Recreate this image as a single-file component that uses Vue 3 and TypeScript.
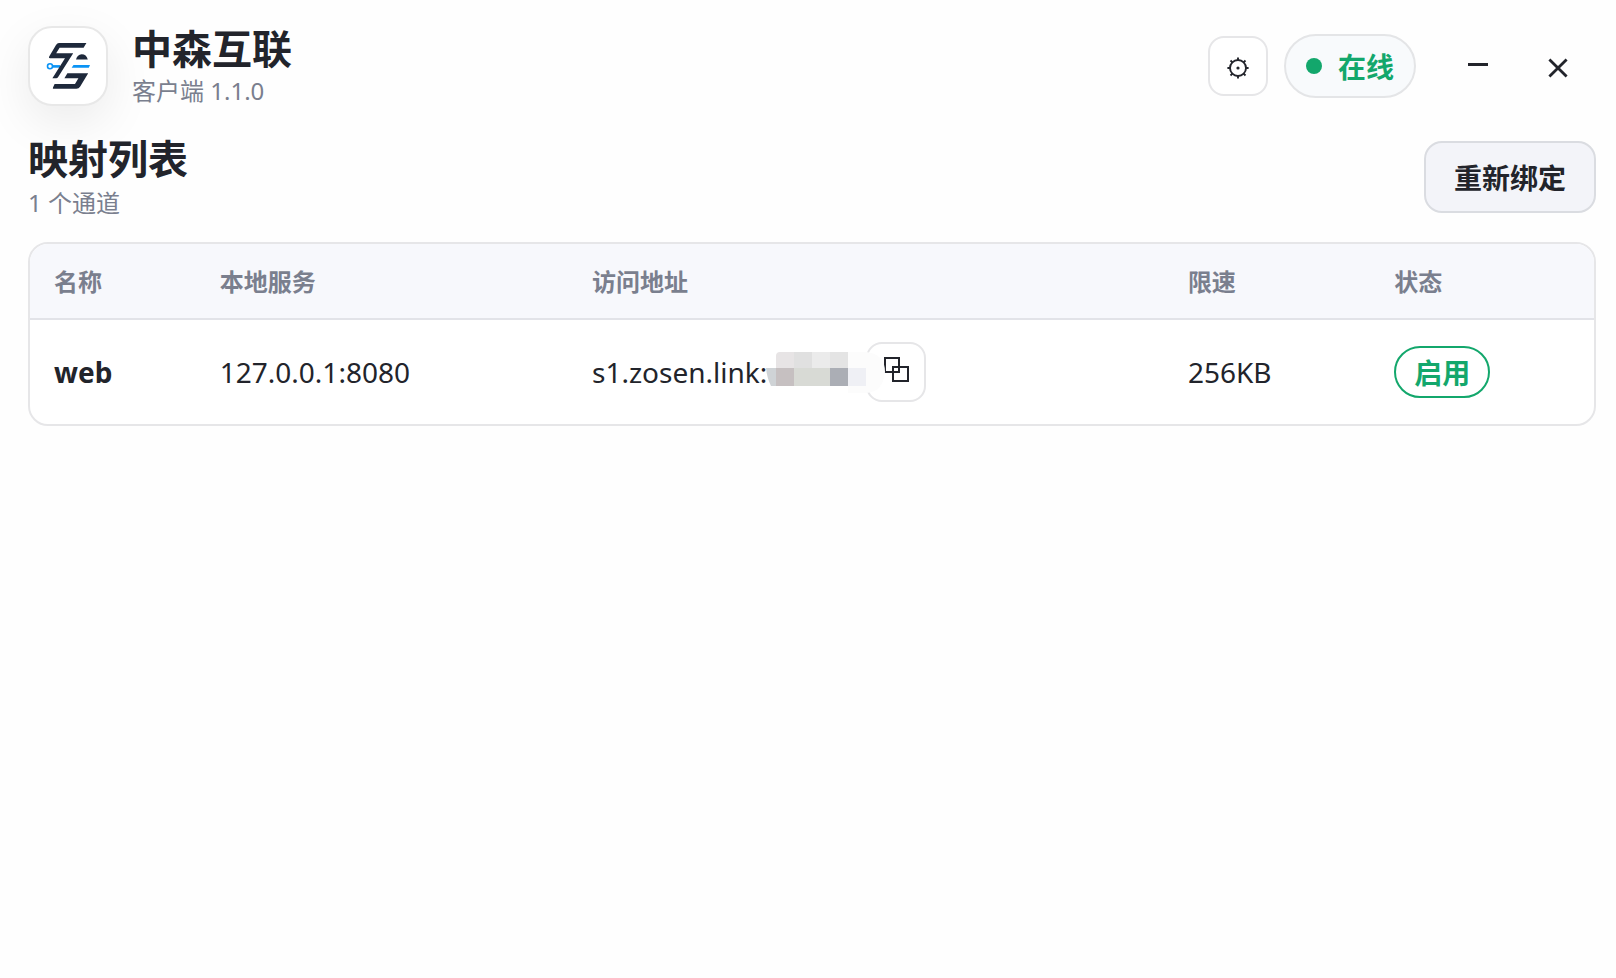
<script setup lang="ts">
interface Channel {
  name: string
  local: string
  host: string
  limit: string
  status: string
}

const version = '1.1.0'
const channels: Channel[] = [
  { name: 'web', local: '127.0.0.1:8080', host: 's1.zosen.link:', limit: '256KB', status: '启用' },
]
</script>

<template>
  <main class="window">
    <header class="titlebar">
      <div class="logo">
        <svg viewBox="0 0 64 64" width="64" height="64" aria-hidden="true">
          <path d="M11.5 32.4H24" stroke="#0a93f5" stroke-width="2.6" />
          <path d="M37.5 31H54L52.8 33.7H35.6Z" fill="#0a93f5" />
          <circle cx="14" cy="32.3" r="2.5" fill="#fff" stroke="#0a93f5" stroke-width="1.6" />
          <path
            d="M23 9H50.4L47.6 13.8H23.6L20.2 19.2H37.2L22 43.2Q21.4 44.2 20.2 44.2H16.4L29 24.2H14Q12.2 24.2 13.2 22.4L20 11Q21.2 9 23 9Z"
            fill="#1e293b"
          />
          <path d="M40 25.4Q41.4 20.6 45.6 20.2Q50.4 20.2 51.8 25.4Z" fill="#1e293b" />
          <path
            d="M31.4 39.2H52.2L44.2 52.4Q42.8 54.8 40.4 54.8H17.2Q16.6 54.8 17 53.6L18.6 50H39L42.4 44.2H28.4Z"
            fill="#1e293b"
          />
        </svg>
      </div>
      <div class="brand">
        <h1>中森互联</h1>
        <p>客户端 {{ version }}</p>
      </div>
      <div class="actions">
        <button class="icon-button" type="button" aria-label="设置">
          <svg viewBox="0 0 24 24" width="24" height="24" fill="none" stroke="#22242b" stroke-width="1.9">
            <circle cx="12" cy="12" r="8" />
            <circle cx="12" cy="12" r="1.6" fill="#22242b" stroke="none" />
            <path
              d="M12 4V1.4M12 20v2.6M4 12H1.4M20 12h2.6M6.4 6.4 4.5 4.5M17.6 6.4l1.9-1.9M6.4 17.6l-1.9 1.9M17.6 17.6l1.9 1.9"
            />
          </svg>
        </button>
        <div class="online"><span class="dot"></span>在线</div>
        <div class="window-buttons">
          <button type="button" aria-label="最小化">
            <svg viewBox="0 0 24 24" width="24" height="24"><path d="M2 8.5H22" stroke="#22242b" stroke-width="3" /></svg>
          </button>
          <button type="button" aria-label="关闭">
            <svg viewBox="0 0 24 24" width="24" height="24">
              <path d="M3.4 3.4 20.6 20.6M20.6 3.4 3.4 20.6" stroke="#22242b" stroke-width="2.8" />
            </svg>
          </button>
        </div>
      </div>
    </header>

    <section class="section-head">
      <div class="heading">
        <h2>映射列表</h2>
        <p>{{ channels.length }} 个通道</p>
      </div>
      <button class="rebind" type="button">重新绑定</button>
    </section>

    <div class="panel">
      <table>
        <colgroup>
          <col class="c-name" />
          <col class="c-local" />
          <col class="c-address" />
          <col class="c-limit" />
          <col />
        </colgroup>
        <thead>
          <tr>
            <th scope="col">名称</th>
            <th scope="col">本地服务</th>
            <th scope="col">访问地址</th>
            <th scope="col">限速</th>
            <th scope="col">状态</th>
          </tr>
        </thead>
        <tbody>
          <tr v-for="channel in channels" :key="channel.name">
            <td><strong>{{ channel.name }}</strong></td>
            <td>{{ channel.local }}</td>
            <td>
              <div class="address">
                <span>{{ channel.host }}</span>
                <svg class="masked" viewBox="0 0 120 46" width="120" height="46" aria-hidden="true">
                  <path d="M82 3H100Q119 5 119 23Q117 43 100 44H82Z" fill="#fcfcfc" />
                  <path d="M10 19V7Q10 3 14 3H28V19Z" fill="#e7e4e5" />
                  <rect x="28" y="3" width="18" height="16" fill="#e0e0e0" />
                  <rect x="46" y="3" width="18" height="16" fill="#ebebeb" />
                  <rect x="64" y="3" width="18" height="16" fill="#e4e4e4" />
                  <path d="M0 19H10V37H5Q1 29 0 19Z" fill="#cfd3d6" />
                  <rect x="10" y="19" width="18" height="18" fill="#c6c0c1" />
                  <rect x="28" y="19" width="36" height="18" fill="#d8dad5" />
                  <rect x="64" y="19" width="18" height="18" fill="#abaeb5" />
                  <rect x="82" y="19" width="18" height="18" fill="#eff0f5" />
                </svg>
                <button class="icon-button" type="button" aria-label="复制">
                  <svg viewBox="0 0 30 30" width="30" height="30" fill="none" stroke="#22242b" stroke-width="2">
                    <path d="M4 1H18V15H4ZM12 10H27V24H12Z" />
                  </svg>
                </button>
              </div>
            </td>
            <td>{{ channel.limit }}</td>
            <td><span class="badge">{{ channel.status }}</span></td>
          </tr>
        </tbody>
      </table>
    </div>
  </main>
</template>

<style>
body {
  background: #fefefe;
}
</style>

<style scoped>
.window {
  box-sizing: border-box;
  min-height: 100vh;
  padding: 26px 20px 28px 28px;
  color: #22242b;
  font-family: "Noto Sans", "Noto Sans CJK SC", sans-serif;
  font-size: 28px;
}

h1,
h2,
p {
  margin: 0;
}

h1,
h2 {
  font-size: 40px;
  line-height: 48px;
  font-weight: 700;
}

p {
  color: #7a7f8e;
  font-size: 24px;
  line-height: 32px;
}

button {
  display: flex;
  align-items: center;
  justify-content: center;
  box-sizing: border-box;
  padding: 0;
  color: inherit;
  font: inherit;
  cursor: pointer;
}

.titlebar {
  display: flex;
  align-items: center;
  gap: 24px;
  height: 80px;
}

.brand,
.heading {
  display: flex;
  flex-direction: column;
  gap: 2px;
}

.logo {
  display: flex;
  align-items: center;
  justify-content: center;
  box-sizing: border-box;
  width: 80px;
  height: 80px;
  border: 2px solid #e8e8e8;
  border-radius: 24px;
  background: #fff;
  box-shadow: 0 16px 48px rgba(0, 0, 0, 0.08);
}

.actions {
  display: flex;
  align-items: center;
  gap: 16px;
  margin-left: auto;
}

.icon-button {
  width: 60px;
  height: 60px;
  border: 2px solid #e6e6e8;
  border-radius: 16px;
  background: #fff;
}

.titlebar .icon-button {
  padding-top: 4px;
}

.online {
  display: flex;
  align-items: center;
  gap: 16px;
  box-sizing: border-box;
  height: 64px;
  padding: 0 20px;
  border: 2px solid #e4e5e7;
  border-radius: 32px;
  background: #f8fafc;
  color: #13a76c;
  font-weight: 700;
}

.dot {
  width: 16px;
  height: 16px;
  border-radius: 50%;
  background: #13a76c;
}

.window-buttons {
  display: flex;
  gap: 4px;
  margin-left: 8px;
}

.window-buttons button {
  width: 76px;
  height: 60px;
  padding-top: 4px;
  border: 0;
  background: transparent;
}

.section-head {
  display: flex;
  align-items: center;
  justify-content: space-between;
  margin-top: 29px;
}

.heading {
  gap: 4px;
}

.rebind {
  height: 72px;
  padding: 0 28px;
  border: 2px solid #dadce1;
  border-radius: 18px;
  background: #f3f4f9;
  font-weight: 700;
}

.panel {
  margin-top: 23px;
  overflow: hidden;
  border: 2px solid #e6e6e8;
  border-radius: 20px;
  background: #fff;
}

table {
  width: 100%;
  table-layout: fixed;
  border-collapse: collapse;
}

.c-name {
  width: 10.6%;
}

.c-local {
  width: 23.8%;
}

.c-address {
  width: 38.1%;
}

.c-limit {
  width: 13.2%;
}

th,
td {
  padding: 0 24px;
  text-align: left;
  white-space: nowrap;
}

th {
  height: 72px;
  padding-bottom: 2px;
  border-bottom: 2px solid #e2e3e8;
  background: #f7f8fc;
  color: #7a7f8e;
  font-size: 24px;
  font-weight: 700;
}

td {
  height: 104px;
}

.address {
  display: flex;
  align-items: center;
}

.masked {
  z-index: 1;
  margin-right: -20px;
  margin-left: -1px;
}

.badge {
  display: inline-flex;
  align-items: center;
  box-sizing: border-box;
  height: 52px;
  padding: 0 18px;
  border: 2px solid #13a76c;
  border-radius: 26px;
  color: #13a76c;
  font-weight: 700;
  vertical-align: middle;
}
</style>
